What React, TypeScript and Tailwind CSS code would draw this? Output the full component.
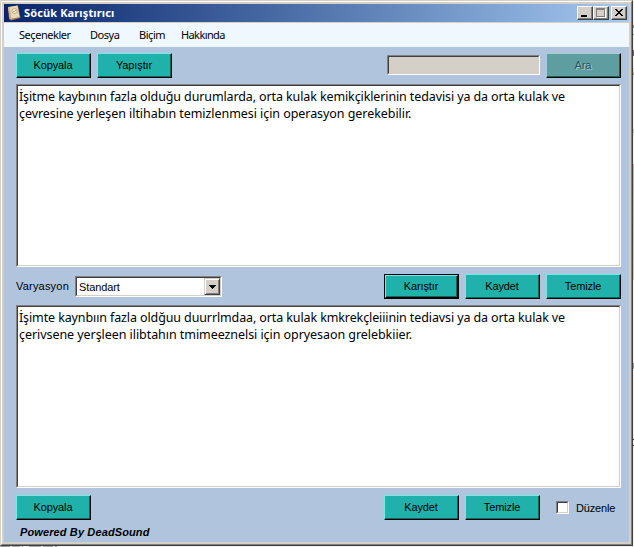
import React from "react";

const sans = "font-['Liberation_Sans',Arial,sans-serif]";
const noto = "font-['Noto_Sans',sans-serif]";

function Button({ label, focused = false, disabled = false }: { label: string; focused?: boolean; disabled?: boolean }) {
  const face = disabled
    ? "bg-[#5f9ea0] text-[#2c5560] border-t-[#a2d0d0] border-l-[#a2d0d0] [text-shadow:1px_1px_0_#a2cccc]"
    : "bg-[#20b2aa] text-black border-t-[#74eae4] border-l-[#74eae4]";
  return (
    <div className={`h-[25px] w-[75px] shrink-0 ${focused ? "bg-black p-px" : ""}`}>
      <button
        className={`flex h-full w-full items-center justify-center border border-r-black border-b-black pr-px pb-px text-[11px] leading-none tracking-[-0.12px] shadow-[inset_-1px_-1px_0_#12655f] ${face}`}
      >
        {label}
      </button>
    </div>
  );
}

function Sunken({ className, children }: { className: string; children?: React.ReactNode }) {
  return (
    <div className={`border border-t-[#808080] border-r-white border-b-white border-l-[#808080] ${className}`}>
      <div className="h-full w-full border border-t-[#404040] border-r-[#d4d0c8] border-b-[#d4d0c8] border-l-[#404040]">
        {children}
      </div>
    </div>
  );
}

function TextBox({ first, second }: { first: string; second: string }) {
  return (
    <Sunken className="h-[183px] w-[605px] bg-white">
      <div className={`${noto} pt-[2px] pl-px text-[12.5px] leading-[17px] whitespace-nowrap text-black`}>
        <div className="tracking-[-0.115px]">{first}</div>
        <div className="tracking-[-0.06px]">{second}</div>
      </div>
    </Sunken>
  );
}

function Caption({ children }: { children: React.ReactNode }) {
  return (
    <div className="h-[14px] w-4 border border-t-white border-r-[#404040] border-b-[#404040] border-l-white bg-[#d4d0c8] shadow-[inset_-1px_-1px_0_#808080]">
      <svg className="block" width="14" height="12" viewBox="0 0 14 12" shapeRendering="crispEdges">{children}</svg>
    </div>
  );
}

// Sliver of the page that shows to the right of the window.
function PageEdge() {
  return (
    <div className="flex h-[547px] w-px shrink-0 flex-col">
      <div className="mt-[25px] h-[3px] bg-[#a98572]" />
      <div className="mt-[6px] h-px bg-[#777]" />
      <div className="mt-[15px] h-[6px] bg-[#4668a5]" />
      <div className="mt-[12px] h-[5px] bg-[#f0d79b]" />
      <div className="h-[2px] bg-[#a09a90]" />
      <div className="mt-[54px] h-[4px] bg-[#b9cddd]" />
      <div className="mt-[31px] h-[116px] bg-linear-to-b from-[#d9ab98] to-[#e8c4b2]" />
      <div className="mt-[83px] h-[6px] bg-[#6e9ccc]" />
      <div className="mt-[70px] h-px bg-[#333]" />
      <div className="mt-[5px] h-px bg-[#333]" />
    </div>
  );
}

export default function App() {
  return (
    <div className="h-[547px] w-[634px] overflow-hidden bg-[#f1f1f1]">
      <div className="flex h-[546px]">
        <div className={`${sans} h-[546px] w-[633px] shrink-0 border border-t-[#d4d0c8] border-r-[#404040] border-b-[#404040] border-l-[#d4d0c8]`}>
          <div className="h-full border border-t-white border-r-[#808080] border-b-[#808080] border-l-white">
            <div className="h-full border-2 border-[#d4d0c8] bg-[#b0c4de]">
              <header className="flex h-[18px] items-center bg-linear-to-r from-[#0a246a] to-[#a6caf0] pr-[2px]">
                <svg className="ml-[3px]" width="14" height="16" viewBox="0 0 14 16">
                  <path d="M1 2.5 11 .5 13.5 13 4 15.5 2 14Z" fill="#9c8159" />
                  <path d="M1 2 10.5.5 12.5 12 3 14Z" fill="#ead9b5" />
                  <path d="M1 2 3 14 4.5 13.7 2.5 2Z" fill="#c8b184" />
                  <circle cx="7.5" cy="6" r="2.6" fill="#f4e9cf" stroke="#b99f72" strokeWidth=".8" />
                  <path d="m6 6 1 .8L9 5" fill="none" stroke="#a58c66" strokeWidth=".7" />
                </svg>
                <span className={`${noto} ml-[3px] text-[11px] font-bold tracking-[0.12px] whitespace-nowrap text-white`}>Söcük Karıştırıcı</span>
                <div className="ml-auto flex">
                  <Caption><path d="M3 8h6v2H3z" fill="#000" /></Caption>
                  <Caption>
                    <path d="M3 2h9v9H3z" fill="#fff" />
                    <path d="M2 1h9v9H2zM3 3v6h7V3z" fill="#808080" fillRule="evenodd" />
                    <path d="M3 3h7v6H3z" fill="#d4d0c8" />
                  </Caption>
                  <div className="w-[2px]" />
                  <Caption>
                    <path d="M3 2h2v1h1v1h2V3h1V2h2v1h-1v1H9v1H8v1h1v1h1v1h1v1H9V8H8V7H6v1H5v1H3V8h1V7h1V6h1V5H5V4H4V3H3z" fill="#000" />
                  </Caption>
                </div>
              </header>
              <nav className={`${noto} flex h-[25px] items-center border-t border-[#d4d0c8] bg-[#f0f8ff] pl-[15px] text-[11px] tracking-[-0.45px] text-black`}>
                <span className="w-[71px]">Seçenekler</span>
                <span className="w-[49px]">Dosya</span>
                <span className="w-[42px]">Biçim</span>
                <span className="tracking-[-0.6px]">Hakkında</span>
              </nav>
              <main className="px-3 pt-[6px]">
                <div className="flex w-[605px] gap-[6px]">
                  <Button label="Kopyala" />
                  <Button label="Yapıştır" />
                  <Sunken className="mt-[2px] ml-auto h-5 w-[153px] bg-[#d4d0c8]" />
                  <Button label="Ara" disabled />
                </div>
                <div className="mt-[6px]">
                  <TextBox
                    first="İşitme kaybının fazla olduğu durumlarda, orta kulak kemikçiklerinin tedavisi ya da orta kulak ve"
                    second="çevresine yerleşen iltihabın temizlenmesi için operasyon gerekebilir."
                  />
                </div>
                <div className="mt-[7px] flex h-[25px] w-[605px] gap-[6px]">
                  <span className="w-[53px] pt-[6px] text-[11px] leading-[13px] tracking-[0.2px]">Varyasyon</span>
                  <Sunken className="mt-[2px] h-[21px] w-[147px] bg-white">
                    <div className="flex h-full items-center justify-between pl-[2px] text-[11px]">
                      <span className="pt-px tracking-[-0.1px]">Standart</span>
                      <div className="flex h-[17px] w-4 items-center justify-center border border-t-[#d4d0c8] border-r-[#404040] border-b-[#404040] border-l-[#d4d0c8] bg-[#d4d0c8] shadow-[inset_1px_1px_0_#fff,inset_-1px_-1px_0_#808080]">
                        <svg width="7" height="4" viewBox="0 0 7 4" shapeRendering="crispEdges"><path d="M0 0h7v1H6v1H5v1H4v1H3V3H2V2H1V1H0z" /></svg>
                      </div>
                    </div>
                  </Sunken>
                  <div className="ml-auto flex gap-[6px]">
                    <Button label="Karıştır" focused />
                    <Button label="Kaydet" />
                    <Button label="Temizle" />
                  </div>
                </div>
                <div className="mt-[6px]">
                  <TextBox
                    first="İşimte kaynbıın fazla oldğuu duurrlmdaa, orta kulak kmkrekçleiiinin tediavsi ya da orta kulak ve"
                    second="çerivsene yerşleen ilibtahın tmimeeznelsi için opryesaon grelebkiier."
                  />
                </div>
                <div className="mt-[7px] flex w-[605px] gap-[6px]">
                  <Button label="Kopyala" />
                  <div className="ml-auto flex gap-[6px]">
                    <Button label="Kaydet" />
                    <Button label="Temizle" />
                    <label className="flex w-[75px] pl-[10px]">
                      <Sunken className="mt-[6px] h-[13px] w-[13px] shrink-0 bg-white" />
                      <span className="ml-[7px] pt-[7px] text-[11px] leading-[13px] tracking-[-0.15px]">Düzenle</span>
                    </label>
                  </div>
                </div>
                <div className="mt-[5px] pl-1 text-[11px] leading-[14px] font-bold tracking-[0.12px] italic">Powered By DeadSound</div>
              </main>
            </div>
          </div>
        </div>
        <PageEdge />
      </div>
      <div className="flex h-px gap-[2px]">
        <div className="w-[10px] bg-[#999]" />
        <div className="w-[8px] bg-[#aaa]" />
        <div className="mr-1 w-px bg-[#999]" />
        <div className="w-[12px] bg-[#aaa]" />
        <div className="w-[10px] bg-[#aaa]" />
        <div className="w-[2px] bg-[#999]" />
      </div>
    </div>
  );
}
